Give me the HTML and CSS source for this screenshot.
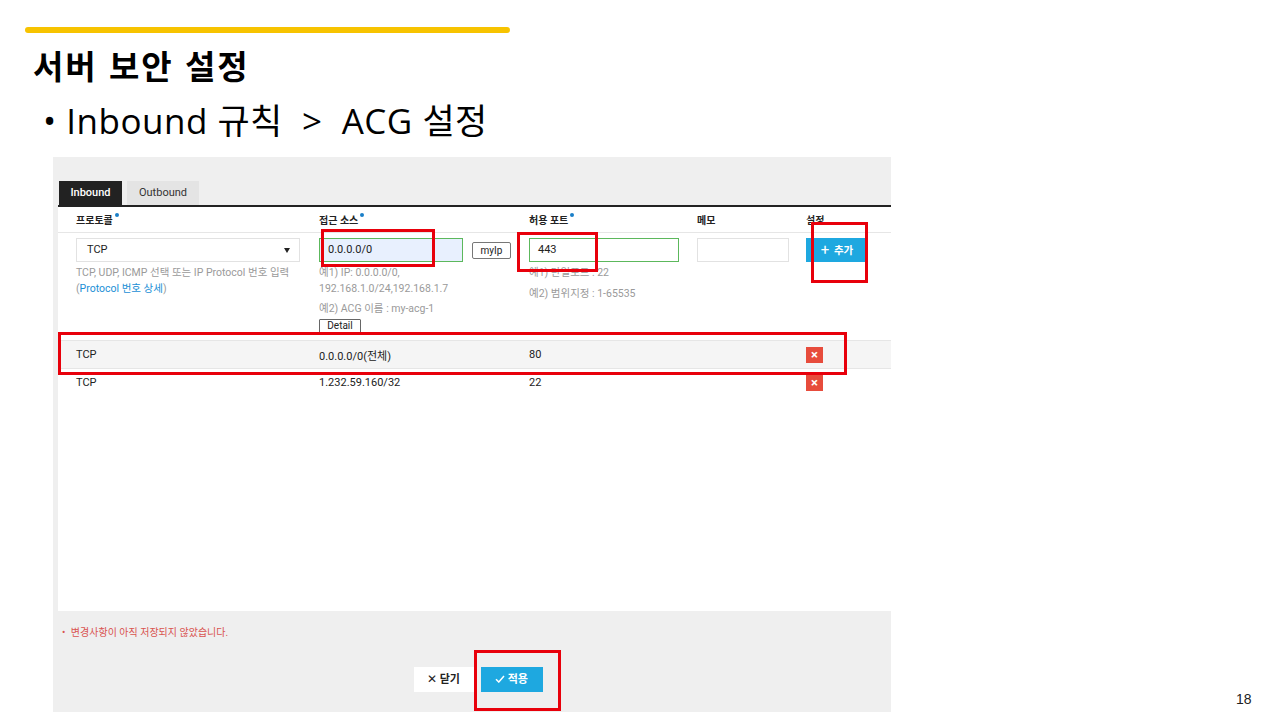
FILE: index.html
```html
<!DOCTYPE html>
<html lang="ko">
<head>
<meta charset="utf-8">
<link rel="stylesheet" href="styles.css">
</head>
<body>
<div class="slide">
  <div class="accent"></div>
  <h1 class="title">서버 보안 설정</h1>
  <p class="bullet">• Inbound 규칙 &nbsp;&gt;&nbsp; ACG 설정</p>

  <div class="panel">
    <div class="tabs">
      <div class="tab active">Inbound</div>
      <div class="tab">Outbound</div>
    </div>
    <div class="sheet">
      <div class="grid head">
        <div>프로토콜<span class="dot"></span></div>
        <div>접근 소스<span class="dot"></span></div>
        <div>허용 포트<span class="dot"></span></div>
        <div>메모</div>
        <div>설정</div>
      </div>
      <div class="grid form">
        <div>
          <div class="select">TCP <span class="caret"></span></div>
          <p class="help first">TCP, UDP, ICMP 선택 또는 IP Protocol 번호 입력</p>
          <p class="help">(<span class="link">Protocol 번호 상세</span>)</p>
        </div>
        <div>
          <div class="inline">
            <div class="input src">0.0.0.0/0</div>
            <div class="btn-small">myIp</div>
          </div>
          <p class="help first">예1) IP: 0.0.0.0/0,</p>
          <p class="help">192.168.1.0/24,192.168.1.7</p>
          <p class="help gap">예2) ACG 이름 : my-acg-1</p>
          <div class="btn-detail">Detail</div>
        </div>
        <div>
          <div class="input port">443</div>
          <p class="help first">예1) 단일포트 : 22</p>
          <p class="help gap2">예2) 범위지정 : 1-65535</p>
        </div>
        <div>
          <div class="input memo"></div>
        </div>
        <div>
          <div class="btn-add"><span class="plus">+</span> 추가</div>
        </div>
      </div>
      <div class="grid row shade">
        <div>TCP</div>
        <div>0.0.0.0/0(전체)</div>
        <div>80</div>
        <div></div>
        <div><span class="del">×</span></div>
      </div>
      <div class="grid row">
        <div>TCP</div>
        <div>1.232.59.160/32</div>
        <div>22</div>
        <div></div>
        <div><span class="del">×</span></div>
      </div>
    </div>
    <p class="warn"><span class="wdot">•</span> 변경사항이 아직 저장되지 않았습니다.</p>
    <div class="actions">
      <div class="btn-close"><span class="x">✕</span> 닫기</div>
      <div class="btn-apply"><svg width="10" height="8" viewBox="0 0 10 8"><path d="M1 4.2 L3.8 7 L9 1" fill="none" stroke="#fff" stroke-width="1.5"/></svg> 적용</div>
    </div>
  </div>

  <div class="mark m1"></div>
  <div class="mark m2"></div>
  <div class="mark m3"></div>
  <div class="mark m4"></div>
  <div class="mark m5"></div>

  <div class="pageno">18</div>
</div>
</body>
</html>
```

FILE: styles.css
```css
* { box-sizing: border-box; }
html, body { margin: 0; padding: 0; }
body {
  width: 1280px;
  height: 720px;
  overflow: hidden;
  background: #fff;
  font-family: "Noto Sans CJK KR", "Noto Sans", sans-serif;
  color: #000;
}
.slide { position: relative; width: 1280px; height: 720px; padding-top: 27px; }
.accent {
  margin-left: 25px;
  width: 485px;
  height: 6px;
  border-radius: 3px;
  background: #f7c300;
}
.title {
  margin: 10px 0 0 33px;
  font-size: 33px;
  line-height: 44px;
  font-weight: 700;
  letter-spacing: 2px;
}
.bullet {
  margin: 8px 0 0 43px;
  font-size: 35px;
  line-height: 52px;
  font-weight: 400;
  font-family: "Open Sans", "Noto Sans CJK KR", sans-serif;
  letter-spacing: 0.5px;
}
.panel {
  margin: 10px 0 0 53px;
  width: 838px;
  height: 555px;
  background: #efefef;
  padding-top: 24px;
  font-family: Roboto, "Noto Sans CJK KR", sans-serif;
  font-size: 11px;
  color: #333;
}
.tabs { display: flex; gap: 5px; margin-left: 6px; }
.tab {
  width: 72px;
  height: 24px;
  line-height: 24px;
  text-align: center;
  background: #e4e4e4;
  color: #333;
  font-size: 11px;
}
.tab.active { width: 63px; background: #222; color: #fff; font-weight: 500; }
.sheet {
  margin-left: 5px;
  height: 406px;
  background: #fff;
  border-top: 2px solid #222;
}
.grid {
  display: grid;
  grid-template-columns: 243px 210px 168px 109px 1fr;
  padding-left: 18px;
}
.head {
  height: 26px;
  align-items: center;
  font-weight: 700;
  font-size: 10px;
  border-bottom: 1px solid #e6e6e6;
  color: #222;
}
.dot {
  display: inline-block;
  width: 4px; height: 4px;
  border-radius: 50%;
  background: #1a7fc8;
  vertical-align: top;
  margin: 1px 0 0 2px;
}
.form { padding-top: 5px; height: 107px; }
.select {
  width: 224px;
  height: 24px;
  border: 1px solid #e2e2e2;
  padding: 0 10px;
  line-height: 22px;
  position: relative;
  color: #222;
}
.caret {
  position: absolute;
  right: 9px; top: 9px;
  border-left: 3.5px solid transparent;
  border-right: 3.5px solid transparent;
  border-top: 5px solid #222;
}
.help { margin: 0; line-height: 16px; color: #9a9a9a; font-size: 10.5px; }
.help.first { margin-top: 3px; }
.help.gap { margin-top: 4px; }
.help.gap2 { margin-top: 5px; }
.link { color: #1a8fd6; }
.inline { display: flex; align-items: center; gap: 9px; }
.input {
  height: 24px;
  border: 1px solid #5cb85c;
  padding: 0 8px;
  line-height: 22px;
  color: #222;
}
.input.src { width: 144px; background: #e8f0fe; }
.input.port { width: 150px; }
.input.memo { width: 92px; border-color: #e2e2e2; }
.btn-small {
  width: 39px;
  height: 17px;
  border: 1px solid #777;
  border-radius: 2px;
  font-size: 10px;
  line-height: 15px;
  text-align: center;
  color: #222;
}
.btn-detail {
  width: 42px;
  height: 14px;
  border: 1px solid #666;
  border-radius: 1px;
  font-size: 10px;
  line-height: 12px;
  text-align: center;
  color: #222;
  margin-top: 2px;
  background: #fff;
}
.btn-add {
  width: 62px;
  height: 24px;
  background: #1ea8e0;
  color: #fff;
  font-weight: 700;
  font-size: 10.5px;
  line-height: 24px;
  text-align: center;
}
.plus { font-size: 15px; font-weight: 400; vertical-align: -1px; margin-right: 2px; }
.row {
  height: 28px;
  align-items: center;
  border-top: 1px solid #e6e6e6;
  color: #222;
}
.shade { background: #f5f5f5; }
.del {
  display: inline-block;
  width: 17px; height: 16px;
  background: #e74c3c;
  color: #fff;
  font-size: 13px;
  line-height: 15px;
  text-align: center;
  font-weight: 700;
}
.warn {
  margin: 15px 0 0 9px;
  font-size: 10px;
  color: #d9534f;
  line-height: 14px;
}
.wdot { margin-right: 3px; }
.actions {
  display: flex;
  justify-content: center;
  gap: 7px;
  margin-top: 27px;
  padding-left: 12px;
}
.btn-close, .btn-apply {
  height: 25px;
  line-height: 25px;
  font-size: 11px;
  font-weight: 700;
  text-align: center;
}
.btn-close { width: 60px; background: #fff; color: #222; }
.x { font-weight: 400; font-size: 12px; }
.btn-apply { width: 62px; background: #1ea8e0; color: #fff; }
.btn-apply svg { vertical-align: 0px; }
.mark { position: absolute; border: 3px solid #e8000b; }
.m1 { left: 321px; top: 229px; width: 114px; height: 38px; }
.m2 { left: 517px; top: 232px; width: 81px; height: 40px; }
.m3 { left: 811px; top: 222px; width: 57px; height: 61px; }
.m4 { left: 58px; top: 332px; width: 789px; height: 43px; }
.m5 { left: 474px; top: 650px; width: 87px; height: 61px; }
.pageno {
  position: absolute;
  left: 1236px;
  top: 691px;
  font-family: "Liberation Sans", Arial, sans-serif;
  font-size: 14px;
  line-height: 16px;
  color: #222;
}
```
